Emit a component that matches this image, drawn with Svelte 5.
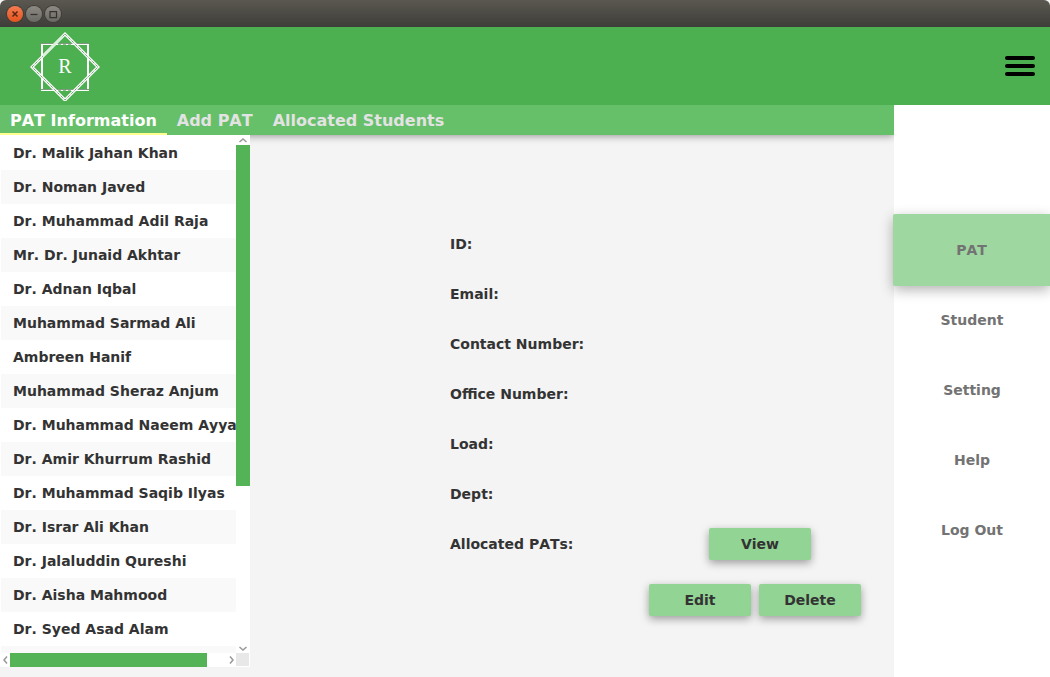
<script>
  const tabs = ['PAT Information', 'Add PAT', 'Allocated Students'];
  const people = [
    'Dr. Malik Jahan Khan',
    'Dr. Noman Javed',
    'Dr. Muhammad Adil Raja',
    'Mr. Dr. Junaid Akhtar',
    'Dr. Adnan Iqbal',
    'Muhammad Sarmad Ali',
    'Ambreen Hanif',
    'Muhammad Sheraz Anjum',
    'Dr. Muhammad Naeem Ayyaz',
    'Dr. Amir Khurrum Rashid',
    'Dr. Muhammad Saqib Ilyas',
    'Dr. Israr Ali Khan',
    'Dr. Jalaluddin Qureshi',
    'Dr. Aisha Mahmood',
    'Dr. Syed Asad Alam'
  ];
  const fields = ['ID:', 'Email:', 'Contact Number:', 'Office Number:', 'Load:', 'Dept:'];
  const menu = ['PAT', 'Student', 'Setting', 'Help', 'Log Out'];
  let activeTab = $state('PAT Information');
  let activeMenu = $state('PAT');
</script>

<div class="window">
  <div class="titlebar">
    <button class="control close" aria-label="Close window">
      <svg viewBox="0 0 16 16"><path d="M5.5 5.5l5 5M10.5 5.5l-5 5" /></svg>
    </button>
    <button class="control" aria-label="Minimize window">
      <svg viewBox="0 0 16 16"><path d="M4.5 8.5h7" /></svg>
    </button>
    <button class="control" aria-label="Maximize window">
      <svg viewBox="0 0 16 16"><path d="M5 5.5h6.500v6H5z" /></svg>
    </button>
  </div>

  <header>
    <div class="logo">
      <svg viewBox="0 0 70 70" aria-hidden="true">
        <g fill="none">
          <path d="M12 13v46M58 13v46" stroke="#fff" stroke-width="2" />
          <path d="M11 12.500h48M11 58.500h48" stroke="#7d9a7e" />
          <path d="M11 13.500h48M11 59.500h48" stroke="#fff" />
          <path d="M35 3L68 36L35 69L2 36z" stroke="#fff" stroke-width="3" />
          <path d="M35 3L68 36L35 69L2 36z" stroke="#39823d" stroke-dasharray="1 1" />
          <path d="M13 25L32 6" stroke="#d9f0da" stroke-width="2" />
          <path d="M28 13.500h14M28 59.500h14" stroke="#8fc492" stroke-dasharray="3 2" />
        </g>
      </svg>
      <span>R</span>
    </div>
    <button class="burger" aria-label="Menu"><i></i><i></i><i></i></button>
  </header>

  <div class="body">
    <main>
      <nav class="tabs" aria-label="Sections">
        {#each tabs as tab}
          <button class:active={tab === activeTab} onclick={() => (activeTab = tab)}>{tab}</button>
        {/each}
      </nav>
      <div class="content">
        <section class="list" aria-label="PAT list">
          <ul>
            {#each people as person}
              <li>{person}</li>
            {/each}
            <li></li>
          </ul>
          <div class="track vertical">
            <svg viewBox="0 0 14 10"><path d="M3.500 7l3.500-3 3.500 3" /></svg>
            <div class="rail"><div class="thumb"></div></div>
            <svg viewBox="0 0 14 10"><path d="M3.500 4l3.500 3 3.500-3" /></svg>
          </div>
          <div class="track horizontal">
            <svg viewBox="0 0 10 14"><path d="M7 3.500L4 7l3 3.500" /></svg>
            <div class="rail"><div class="thumb"></div></div>
            <svg viewBox="0 0 10 14"><path d="M4 3.500l3 3.500-3 3.500" /></svg>
          </div>
          <div class="corner"></div>
        </section>
        <section class="details" aria-label="PAT details">
          {#each fields as field}
            <div class="field">{field}</div>
          {/each}
          <div class="field allocated">
            <span>Allocated PATs:</span>
            <button class="action">View</button>
          </div>
          <div class="actions">
            <button class="action">Edit</button>
            <button class="action">Delete</button>
          </div>
        </section>
      </div>
    </main>
    <nav class="side" aria-label="Main menu">
      {#each menu as item}
        <button class:active={item === activeMenu} onclick={() => (activeMenu = item)}>{item}</button>
      {/each}
    </nav>
  </div>
</div>

<style>
  :global(body) {
    margin: 0;
  }
  .window {
    display: flex;
    flex-direction: column;
    height: 100vh;
    overflow: hidden;
    background: #f4f4f4;
    color: #333;
    font: bold 14px/20px 'DejaVu Sans', sans-serif;
    font-kerning: none;
  }
  button {
    margin: 0;
    padding: 0;
    border: 0;
    background: none;
    color: inherit;
    font: inherit;
    font-kerning: none;
    cursor: pointer;
  }
  .titlebar {
    display: flex;
    flex: none;
    align-items: center;
    gap: 3px;
    box-sizing: border-box;
    height: 27px;
    padding: 0 7px;
    border-radius: 6px 6px 0 0;
    background: linear-gradient(#5a5850, #3e3d39);
  }
  .control {
    box-sizing: border-box;
    width: 16px;
    height: 16px;
    border-radius: 50%;
    background: linear-gradient(#8c8a83, #6b6963);
    box-shadow: 0 0 0 1px #3f3d38;
  }
  .control.close {
    background: linear-gradient(#f67c50, #e2541f);
  }
  .control svg {
    display: block;
    fill: none;
    stroke: #35332e;
    stroke-width: 1.250;
  }
  .control.close svg {
    stroke: #5a2410;
    stroke-width: 1.500;
  }
  header {
    display: flex;
    flex: none;
    align-items: center;
    justify-content: space-between;
    height: 78px;
    padding: 0 15px 0 30px;
    background: #4caf50;
  }
  .logo {
    display: grid;
    place-items: center;
  }
  .logo > * {
    grid-area: 1 / 1;
  }
  .logo svg {
    width: 70px;
    height: 70px;
  }
  .logo span {
    color: #fff;
    font: 20px/24px 'Liberation Serif', serif;
  }
  .burger {
    display: flex;
    flex-direction: column;
    gap: 4px;
    width: 30px;
  }
  .burger i {
    width: 100%;
    height: 4px;
    border-radius: 2px;
    background: #000;
  }
  .body {
    display: flex;
    flex: 1;
    min-height: 0;
  }
  main {
    display: flex;
    flex: 1;
    flex-direction: column;
    min-width: 0;
  }
  .tabs {
    display: flex;
    flex: none;
    height: 30px;
    background: #66bf69;
    box-shadow: 0 1px 8px rgb(0 0 0 / 40%);
    clip-path: inset(0 0 -12px 0);
    color: #e3e3e3;
    font-size: 16px;
  }
  .tabs button {
    padding: 2px 10px 0;
    white-space: nowrap;
  }
  .tabs .active {
    box-shadow: inset 0 -2px #ffff8d;
    color: #fff;
  }
  .content {
    display: flex;
    flex: 1;
    min-height: 0;
  }
  .list {
    display: grid;
    flex: none;
    grid-template: minmax(0, 1fr) 14px / minmax(0, 1fr) 14px;
    width: 250px;
    margin-bottom: 10px;
    background: #fff;
    z-index: 1;
  }
  ul {
    margin: 0;
    padding: 1px 0 0 1px;
    overflow: hidden;
    list-style: none;
  }
  li {
    box-sizing: border-box;
    height: 34px;
    padding: 0 12px;
    line-height: 34px;
    white-space: nowrap;
  }
  li:nth-child(even) {
    background: #f9f9f9;
  }
  .track {
    display: flex;
  }
  .vertical {
    flex-direction: column;
  }
  .track svg {
    flex: none;
    fill: none;
    stroke: #999;
    stroke-width: 1.500;
  }
  .vertical svg {
    width: 14px;
    height: 10px;
  }
  .horizontal svg {
    width: 10px;
    height: 14px;
  }
  .rail {
    flex: 1;
    min-height: 0;
  }
  .thumb {
    background: #54b257;
  }
  .vertical .thumb {
    height: 68.500%;
  }
  .horizontal .thumb {
    width: 91%;
    height: 100%;
  }
  .corner {
    margin: 0 1px 1px 0;
    background: #e8e8e8;
  }
  .details {
    flex: 1;
    min-width: 0;
    padding: 84px 33px 0 200px;
  }
  .field {
    display: flex;
    align-items: center;
    height: 50px;
  }
  .allocated {
    justify-content: space-between;
    padding-right: 50px;
  }
  .actions {
    display: flex;
    justify-content: flex-end;
    gap: 8px;
    margin-top: 15px;
  }
  .action {
    width: 102px;
    height: 32px;
    border-radius: 2px;
    background: #91d493;
    box-shadow: 0 3px 9px rgb(0 0 0 / 36%);
  }
  .side {
    display: flex;
    flex: none;
    flex-direction: column;
    width: 156px;
    padding-top: 110px;
    background: #fff;
    color: #737373;
  }
  .side button {
    height: 70px;
  }
  .side .active {
    z-index: 1;
    height: 72px;
    margin: -1px 0 -1px -1px;
    border-radius: 2px 0 0 2px;
    background: #9ed7a0;
    box-shadow: 0 4px 13px rgb(0 0 0 / 30%);
  }
</style>
